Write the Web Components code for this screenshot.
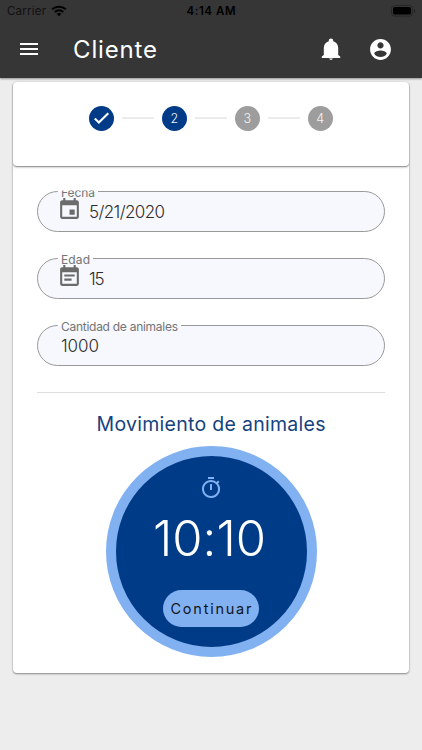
<!DOCTYPE html>
<html lang="es">
<head>
<meta charset="utf-8">
<title>Cliente</title>
<style>
body { margin: 0; background: #ededed; font-family: Inter, "Open Sans", sans-serif; overflow: hidden; }
</style>
</head>
<body>
<mobile-app></mobile-app>
<script>
const define = (name, html, setup) => customElements.define(name, class extends HTMLElement {
  connectedCallback() {
    if (this.shadowRoot) return;
    const root = this.attachShadow({ mode: 'open' });
    root.innerHTML = html;
    if (setup) setup(this, root);
  }
});

/* Text spread by letter spacing so that it takes exactly the given width. */
define('fit-text', `<style>:host{display:inline-block;white-space:pre;line-height:1}span{display:inline-block}</style><span></span>`, (host, root) => {
  const span = root.querySelector('span');
  span.textContent = host.getAttribute('text');
  const width = Number(host.getAttribute('width'));
  host.style.width = width + 'px';
  const natural = span.getBoundingClientRect().width;
  const count = span.textContent.length;
  if (count > 1) span.style.letterSpacing = (width - natural) / (count - 1) + 'px';
});

define('status-bar', `<style>
:host{display:grid;grid-template-columns:1fr auto 1fr;align-items:center;height:22px;color:#000;font-family:Inter,sans-serif;font-size:11.5px}
.left{display:flex;align-items:center;gap:5px;padding-left:7px}
.left fit-text{color:#111;margin-top:1px}
.time{font-weight:600;margin-top:1px}
.right{display:flex;justify-content:flex-end;padding-right:6px}
svg{display:block}
</style>
<div class="left"><fit-text text="Carrier" width="39"></fit-text>
<svg width="16" height="12" viewBox="0 0 16 12" fill="none" stroke="#000" stroke-width="2.1"><path d="M1.2 4.3C5 .8 11 .8 14.8 4.3M3.7 7c2.5-2.2 6.1-2.2 8.6 0"/><path d="M8 11.2 5.6 8.8c1.4-1.2 3.4-1.2 4.8 0z" fill="#000" stroke="none"/></svg></div>
<fit-text class="time" text="4:14 AM" width="49"></fit-text>
<div class="right"><svg width="25" height="12" viewBox="0 0 25 12"><rect x=".5" y=".5" width="21" height="10.6" rx="3" fill="none" stroke="#262626"/><rect x="2" y="2" width="18" height="7.6" rx="1.7"/><path d="M23 4v4c1.6-.6 1.6-3.4 0-4z" fill="#202020"/></svg></div>`);

define('app-bar', `<style>
:host{display:block;height:78px;background:#363636;box-shadow:0 1px 2px #0006}
.row{display:flex;align-items:center;height:54px;padding:0 29px 0 17px;color:#fff}
fit-text{margin:2px 0 0 32px;font-size:24px;flex:none}
.actions{display:flex;gap:25px;margin-left:auto}
svg{display:block;fill:#fff}
</style>
<status-bar></status-bar>
<div class="row">
<svg width="24" height="24" viewBox="0 0 24 24"><path d="M3 18h18v-2H3v2zm0-5h18v-2H3v2zm0-7v2h18V6H3z"/></svg>
<fit-text text="Cliente" width="84"></fit-text>
<div class="actions">
<svg width="24" height="24" viewBox="0 0 24 24"><path d="M12 22.7c.9 0 1.7-.6 1.8-1.3h-3.6c.1.7.9 1.3 1.8 1.3zM19.2 18v-6.8c0-3.4-1.8-6.2-5-7V3.500c0-1.100-1-2-2.200-2s-2.200.9-2.200 2v.7c-3.200.8-5 3.600-5 7V18l-2 1.400V21h18.400v-1.600z"/></svg>
<svg width="25" height="25" viewBox="0 0 24 24"><path d="M12 2C6.480 2 2 6.480 2 12s4.480 10 10 10 10-4.480 10-10S17.520 2 12 2zm0 3c1.660 0 3 1.340 3 3s-1.340 3-3 3-3-1.340-3-3 1.340-3 3-3zm0 14.200c-2.500 0-4.710-1.280-6-3.220.030-1.990 4-3.080 6-3.080 1.990 0 5.970 1.090 6 3.080-1.290 1.940-3.500 3.220-6 3.220z"/></svg>
</div></div>`);

define('step-list', `<style>
:host{display:flex;align-items:flex-start;justify-content:center;box-sizing:border-box;height:84px;padding-top:24px;gap:8px;border-radius:4px;box-shadow:0 1px 1px #0005,0 2px 2px #0002}
i{flex:none;width:32px;height:2px;background:#ececec;margin-top:11px}
b{flex:none;display:flex;align-items:center;justify-content:center;width:25px;height:25px;border-radius:50%;background:#9d9d9d;color:#f5f5f5;font:300 12.500px Inter,sans-serif}
b.on{background:#003b88}
</style>
<b class="on"><svg width="19" height="19" viewBox="0 0 24 24" fill="#fff"><path d="M9 16.200 4.800 12l-1.900 1.900L9 20 21.800 7.200l-1.900-1.900z" transform="translate(-.3 -.9)"/></svg></b><i></i><b class="on">2</b><i></i><b>3</b><i></i><b>4</b>`);

define('form-field', `<style>
:host{display:flex;align-items:center;position:relative;box-sizing:border-box;height:41px;border:1px solid #999;border-radius:21px;background:#f6f8fd;padding-left:23px;color:#2c2c2c;font-family:Inter,sans-serif;font-weight:300;font-size:17px}
svg{display:block;fill:#6b6b6b;margin:-3px 7px 0 -4px}
.icon{position:relative;z-index:1}
.value{margin-top:1px}
.label{position:absolute;left:20px;top:-7px;height:15px;padding:0 3px 0 3px;color:#757575;font:400 12px Inter,sans-serif;background:linear-gradient(#fff 7px,#f6f8fd 7px)}
.label fit-text{margin-top:1px}
:host([clipped]) .label{clip-path:inset(6px 0 0 0)}
</style>
<span class="label"></span><span class="icon"></span><span class="value"></span>`, (host, root) => {
  const fit = (text, width) => `<fit-text text="${text}" width="${width}"></fit-text>`;
  root.querySelector('.label').innerHTML = fit(host.getAttribute('label'), host.getAttribute('label-width'));
  root.querySelector('.value').innerHTML = fit(host.getAttribute('value'), host.getAttribute('value-width'));
  const icons = {
    event: 'M17 12h-5v5h5v-5zM16 1v2H8V1H6v2H5c-1.110 0-2 .9-2 2v14c0 1.100.89 2 2 2h14c1.100 0 2-.9 2-2V5c0-1.100-.9-2-2-2h-1V1h-2zm3 18H5V8h14v11z',
    note: 'M17 10H7v2h10v-2zm2-7h-1V1h-2v2H8V1H6v2H5c-1.110 0-2 .9-2 2v14c0 1.100.89 2 2 2h14c1.100 0 2-.9 2-2V5c0-1.100-.9-2-2-2zm0 16H5V8h14v11zm-5-5H7v2h7v-2z'
  };
  const icon = icons[host.getAttribute('icon')];
  if (icon) root.querySelector('.icon').innerHTML = `<svg width="25" height="25" viewBox="0 0 24 24"><path d="${icon}"/></svg>`;
});

define('timer-dial', `<style>
:host{display:flex;flex-direction:column;align-items:center;box-sizing:border-box;width:211px;height:211px;border-radius:50%;border:10px solid #82b1f1;background:#003b88;padding-top:20px;color:#fff}
svg{display:block}
.time{font:300 49px/1 Inter,sans-serif;margin-top:14px;margin-right:3px}
button{display:flex;align-items:center;justify-content:center;border:0;padding:0;width:96px;height:37px;margin-top:27.500px;border-radius:18.500px;background:#82b1f1;color:#10151c;font:400 14.500px Inter,sans-serif}
button fit-text{margin-top:1px}
</style>
<svg width="24" height="24" viewBox="0 0 24 24" fill="#82b1f1"><path d="M15 1H9v2h6V1zm-4 13h2V8h-2v6zm8.030-6.610 1.420-1.420c-.43-.51-.9-.99-1.410-1.410l-1.420 1.420A8.962 8.962 0 0 0 12 4c-4.970 0-9 4.030-9 9s4.020 9 9 9a8.994 8.994 0 0 0 7.030-14.610zM12 20c-3.870 0-7-3.130-7-7s3.130-7 7-7 7 3.130 7 7-3.130 7-7 7z"/></svg>
<fit-text class="time" text="10:10" width="113"></fit-text>
<button><fit-text text="Continuar" width="81"></fit-text></button>`);

define('record-card', `<style>
:host{display:block;width:396.500px;height:591px;margin:4px 0 0 12.500px;background:#fff;border-radius:4px;box-shadow:0 1px 2px #0006,0 0 2px #0002}
.body{display:flex;flex-direction:column;align-items:stretch;padding:24.500px 24px 0 24.500px}
.fields{display:grid;gap:26px}
hr{width:100%;height:1px;border:0;background:#dedede;margin:26px 0 0}
.title{align-self:center;color:#15427f;font-size:19.500px;margin-top:22.500px}
timer-dial{align-self:center;margin-top:11px}
</style>
<step-list></step-list>
<div class="body"><div class="fields">
<form-field clipped icon="event" label="Fecha" label-width="34" value="5/21/2020" value-width="76"></form-field>
<form-field icon="note" label="Edad" label-width="29" value="15" value-width="15.500"></form-field>
<form-field label="Cantidad de animales" label-width="117" value="1000" value-width="38"></form-field>
</div><hr>
<fit-text class="title" text="Movimiento de animales" width="229"></fit-text>
<timer-dial></timer-dial></div>`);

define('mobile-app', `<style>:host{display:block;height:750px;overflow:hidden}</style><app-bar></app-bar><record-card></record-card>`);
</script>
</body>
</html>
